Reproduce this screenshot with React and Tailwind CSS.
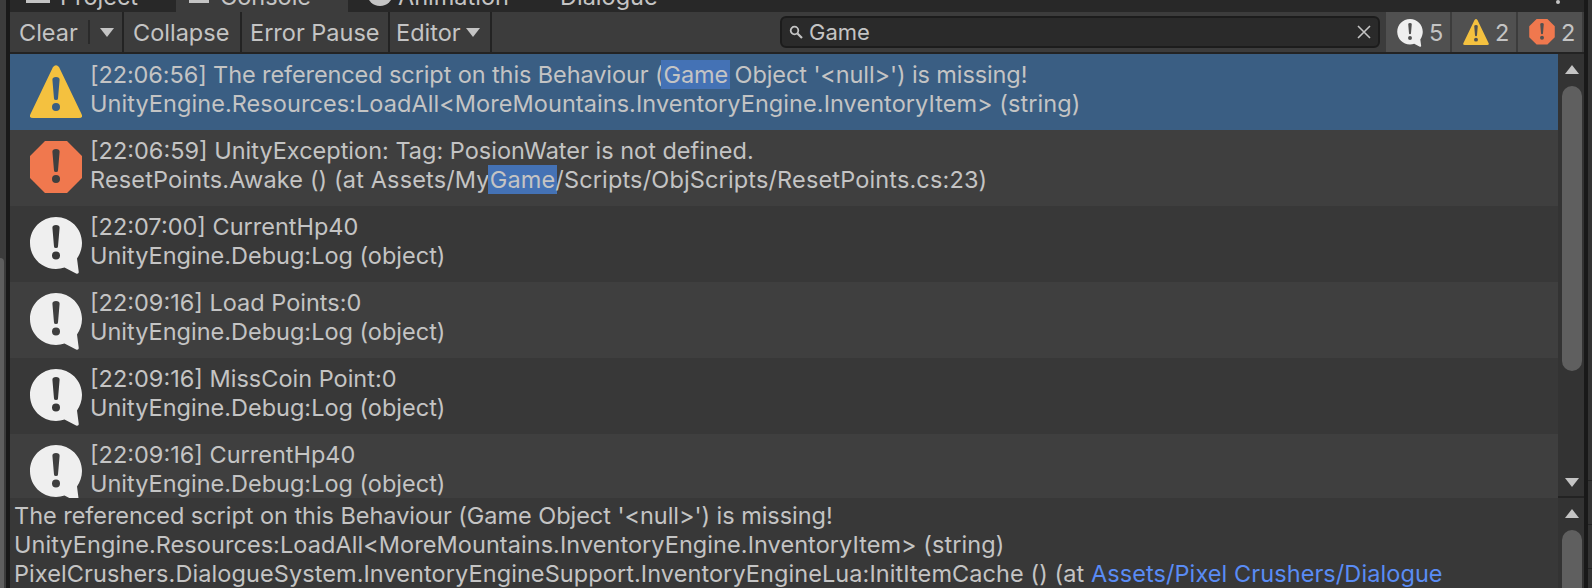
import React from 'react';

const bar = (cx, top, bottom) =>
  `M${cx - 3.6} ${top + 2.8}a3.6 2.8 0 0 1 7.2 0L${cx + 2} ${bottom - 1.5}a2 1.5 0 0 1 -4 0Z`;
const dot = (cx, cy, r) => `M${cx - r} ${cy}a${r} ${r} 0 1 0 ${r * 2} 0a${r} ${r} 0 1 0 ${-r * 2} 0Z`;

const shapes = {
  info: {
    box: '0 0 52 57',
    fill: '#efefef',
    d: 'M26 0C11.6 0 0 11.6 0 26s11.6 26 26 26c3 0 5.8-.5 8.5-1.4l11.6 5.8c1.6.8 2.9-.2 2.6-1.8L47 41.6C50 37.200 52 31.800 52 26 52 11.600 40.400 0 26 0Z' + bar(26, 8, 31) + dot(26, 38.500, 4),
  },
  warning: {
    box: '0 0 52 57',
    fill: '#f4c13f',
    d: 'M23 2Q26 -1.500 29 2L51.500 49Q53.500 53 49 53L3 53Q-1.500 53 .5 49Z' + bar(26, 12, 35) + dot(26, 42, 4),
  },
  error: {
    box: '0 0 52 57',
    fill: '#f0784e',
    d: 'M15 0H37L52 15V37L37 52H15L0 37V15Z' + bar(26, 8, 31) + dot(26, 38, 4),
  },
};

function LogIcon({ type, className }) {
  const s = shapes[type];
  return (
    <svg viewBox={s.box} className={className}>
      <path d={s.d} fill={s.fill} fillRule="evenodd" />
    </svg>
  );
}

function Arrow({ up, className }) {
  return (
    <svg viewBox="0 0 14 9" className={`h-[9px] w-[14px] shrink-0 ${className || ''}`}>
      <path d={up ? 'M7 0L14 9H0Z' : 'M0 0H14L7 9Z'} fill="#c4c4c4" />
    </svg>
  );
}

function Match({ children }) {
  return <span className="-mx-[2px] inline-block bg-[#4472b5] px-[2px] leading-[29px]">{children}</span>;
}

const rows = [
  {
    type: 'warning',
    selected: true,
    topClass: 'tracking-[-0.1px]',
    bottomClass: 'tracking-[0.06px]',
    top: <>[22:06:56] The referenced script on this Behaviour (<Match>Game</Match> Object '&lt;null&gt;') is missing!</>,
    bottom: 'UnityEngine.Resources:LoadAll<MoreMountains.InventoryEngine.InventoryItem> (string)',
  },
  {
    type: 'error',
    bg: 'bg-[#3f3f3f]',
    top: '[22:06:59] UnityException: Tag: PosionWater is not defined.',
    bottomClass: 'tracking-[0.15px]',
    bottom: <>ResetPoints.Awake () (at Assets/My<Match>Game</Match>/Scripts/ObjScripts/ResetPoints.cs:23)</>,
  },
  { type: 'info', bg: 'bg-[#383838]', top: '[22:07:00] CurrentHp40', bottom: 'UnityEngine.Debug:Log (object)' },
  { type: 'info', bg: 'bg-[#3f3f3f]', top: '[22:09:16] Load Points:0', bottom: 'UnityEngine.Debug:Log (object)' },
  { type: 'info', bg: 'bg-[#383838]', top: '[22:09:16] MissCoin Point:0', bottom: 'UnityEngine.Debug:Log (object)' },
  { type: 'info', bg: 'bg-[#3f3f3f]', top: '[22:09:16] CurrentHp40', bottom: 'UnityEngine.Debug:Log (object)' },
];

function LogRow({ row }) {
  return (
    <div className={`flex h-[76px] shrink-0 pl-5 ${row.selected ? 'bg-[#3a5e83]' : row.bg}`}>
      <LogIcon type={row.type} className="mt-[11px] h-[57px] w-[52px] shrink-0" />
      <div className="ml-2 pt-[6px] whitespace-nowrap">
        <div className={row.topClass}>{row.top}</div>
        <div className={row.bottomClass}>{row.bottom}</div>
      </div>
    </div>
  );
}

function Count({ type, value }) {
  return (
    <div className="flex h-full w-16 items-center bg-[#505050] pl-[11px]">
      <LogIcon type={type} className="mt-[2px] h-[28px] w-[26px] shrink-0" />
      <span className="ml-[6px]">{value}</span>
    </div>
  );
}

function Tab({ className, children }) {
  return <div className={`flex h-full items-end overflow-hidden ${className}`}>{children}</div>;
}

export default function App() {
  return (
    <div className="flex h-[588px] w-[1592px] overflow-hidden bg-[#3c3c3c] font-['Inter',sans-serif] text-[23.5px] leading-[29px] text-[#c4c4c4]">
      {/* neighbouring panel */}
      <div className="flex w-[6px] shrink-0 flex-col">
        <div className="h-[258px] shrink-0" />
        <div className="w-[4px] flex-1 rounded-tr-[4px] bg-[#5f5f5f]" />
      </div>
      <div className="w-1 shrink-0 bg-[#191919]" />

      <div className="flex min-w-0 flex-1 flex-col">
        {/* tabs, cut off by the crop */}
        <div className="flex h-3 shrink-0 items-end overflow-hidden bg-[#282828]">
          <Tab className="w-[166px] pl-4">
            <div className="h-[3px] w-6 self-start bg-[#c4c4c4]" />
            <span className="ml-[10px] mb-[1px] whitespace-nowrap">Project</span>
          </Tab>
          <Tab className="w-[172px] bg-[#3c3c3c] pl-[13px]">
            <div className="h-[3px] w-5 self-start bg-[#c4c4c4]" />
            <span className="ml-[11px] mb-[1px] whitespace-nowrap">Console</span>
          </Tab>
          <Tab className="w-[212px] pl-[19px]">
            <div className="-mt-5 h-[26px] w-[26px] shrink-0 self-start rounded-full bg-[#c4c4c4]" />
            <span className="ml-[5px] mb-[1px] whitespace-nowrap">Animation</span>
          </Tab>
          <Tab className="pl-0">
            <span className="mb-[1px] whitespace-nowrap">Dialogue</span>
          </Tab>
          <div className="mb-[8px] ml-auto mr-[24px] h-1 w-1 rounded-full bg-[#c4c4c4]" />
        </div>

        {/* toolbar */}
        <div className="flex h-[42px] shrink-0 border-b-2 border-[#232323]">
          <div className="ml-[2px] flex h-full w-[112px] items-center border-r-2 border-[#232323] pl-[7px]">
            <span>Clear</span>
            <div className="ml-[10px] h-6 w-[2px] bg-[#2a2a2a]" />
            <Arrow className="ml-[10px]" />
          </div>
          <div className="flex h-full w-[118px] items-center border-r-2 border-[#232323] pl-[9px]">Collapse</div>
          <div className="flex h-full w-[148px] items-center border-r-2 border-[#232323] pl-[8px]">Error Pause</div>
          <div className="flex h-full w-[102px] items-center border-r-2 border-[#232323] pl-[6px]">
            <span>Editor</span>
            <Arrow className="ml-[5px]" />
          </div>
          <div className="ml-auto flex h-full items-center">
            <div className="flex h-8 w-[600px] items-center rounded-[6px] border-2 border-[#1c1c1c] bg-[#2a2a2a] pl-[7px] pr-[6px] text-[22px]">
              <svg viewBox="0 0 14 14" className="h-[14px] w-[14px] shrink-0">
                <circle cx="5.500" cy="5.500" r="3.800" fill="none" stroke="#c4c4c4" strokeWidth="1.800" />
                <path d="M8.500 8.500L13 13" stroke="#c4c4c4" strokeWidth="2.200" />
              </svg>
              <span className="ml-[6px]">Game</span>
              <svg viewBox="0 0 16 16" className="ml-auto h-4 w-4">
                <path d="M2 2L14 14M14 2L2 14" stroke="#c4c4c4" strokeWidth="1.600" />
              </svg>
            </div>
            <div className="ml-[6px] flex h-full gap-[2px] pr-[2px]">
              <Count type="info" value="5" />
              <Count type="warning" value="2" />
              <Count type="error" value="2" />
            </div>
          </div>
        </div>

        {/* log list */}
        <div className="flex h-[444px] shrink-0 overflow-hidden">
          <div className="flex min-w-0 flex-1 flex-col overflow-hidden">
            {rows.map((row, i) => (
              <LogRow key={i} row={row} />
            ))}
          </div>
          <div className="flex w-[26px] shrink-0 flex-col items-center border-b-2 border-[#232323] bg-[#333333] pl-[2px] pt-[11px]">
            <Arrow up />
            <div className="mt-[12px] h-[285px] w-5 shrink-0 rounded-full bg-[#5f5f5f]" />
            <Arrow className="mt-[107px]" />
          </div>
        </div>

        {/* message detail */}
        <div className="flex min-h-0 flex-1 overflow-hidden bg-[#383838]">
          <div className="min-w-0 flex-1 whitespace-nowrap pl-[4px] pt-[3px]">
            <div className="tracking-[-0.04px]">The referenced script on this Behaviour (Game Object '&lt;null&gt;') is missing!</div>
            <div className="tracking-[0.06px]">UnityEngine.Resources:LoadAll&lt;MoreMountains.InventoryEngine.InventoryItem&gt; (string)</div>
            <div className="tracking-[0.08px]">
              PixelCrushers.DialogueSystem.InventoryEngineSupport.InventoryEngineLua:InitItemCache () (at{' '}
              <span className="text-[#5a8cf5]">Assets/Pixel Crushers/Dialogue</span>
            </div>
          </div>
          <div className="flex w-[26px] shrink-0 flex-col items-center bg-[#333333] pl-[2px] pt-[11px]">
            <Arrow up />
            <div className="mt-[12px] h-[100px] w-5 shrink-0 rounded-full bg-[#5f5f5f]" />
          </div>
        </div>
      </div>

      <div className="w-1 shrink-0 bg-[#191919]" />
      {/* next panel's rows */}
      <div className="flex w-1 shrink-0 flex-col bg-[#333333]">
        <div className="h-[481px] shrink-0 border-b border-[#232323]" />
        <div className="h-11 shrink-0 border-b border-[#232323]" />
        <div className="h-11 shrink-0 border-b border-[#232323]" />
      </div>
    </div>
  );
}
